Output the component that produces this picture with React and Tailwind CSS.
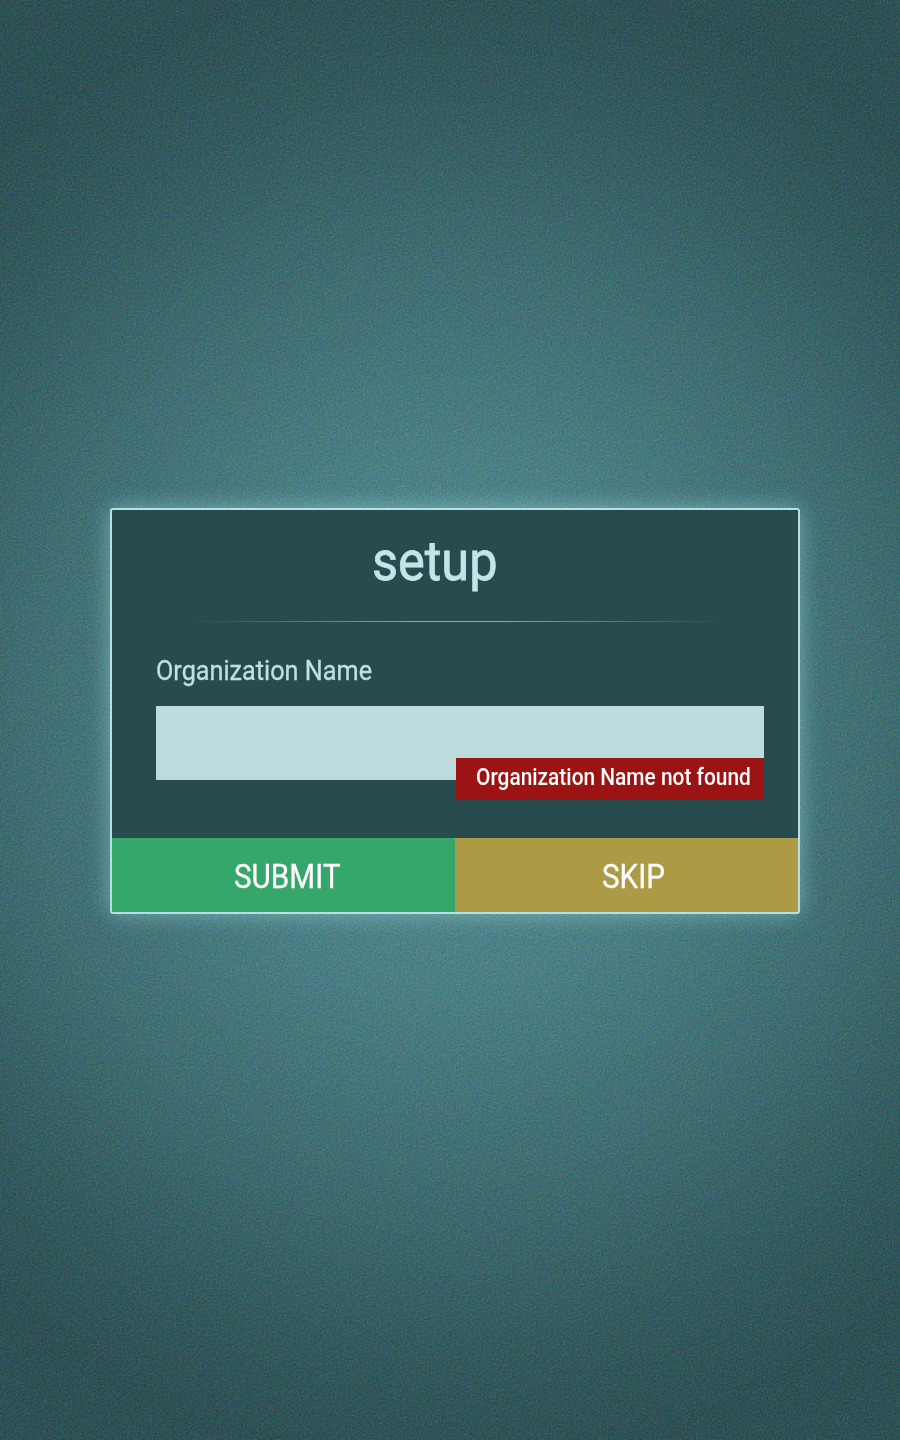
import React from "react";

function Grain() {
  return (
    <svg className="pointer-events-none absolute inset-0 h-full w-full opacity-10" aria-hidden="true">
      <filter id="grain" colorInterpolationFilters="sRGB">
        <feTurbulence type="fractalNoise" baseFrequency="0.55" numOctaves="3" stitchTiles="stitch" />
        <feComponentTransfer>
          <feFuncR type="linear" slope="2.6" intercept="-1" />
          <feFuncG type="linear" slope="2.6" intercept="-0.9" />
          <feFuncB type="linear" slope="2.6" intercept="-0.9" />
          <feFuncA type="linear" slope="0" intercept="1" />
        </feComponentTransfer>
      </filter>
      <rect width="100%" height="100%" filter="url(#grain)" />
    </svg>
  );
}

export default function App() {
  return (
    <main className="relative isolate flex h-[1440px] w-[900px] flex-col overflow-hidden bg-[radial-gradient(ellipse_740px_780px_at_450px_720px,#58989d_0%,#4c8489_32%,#3e6f74_58%,#2f585c_82%,#2a4f53_95%,#2a4f53_100%)] pt-[508px] pl-[110px] font-['Roboto',sans-serif]">
      <Grain />
      <form
        className="relative flex h-[406px] w-[690px] flex-col rounded-[3px] border-2 border-[#b5e1e4] bg-[#284b4d] shadow-[0_0_22px_rgba(150,210,215,0.6)]"
        onSubmit={(e) => e.preventDefault()}
      >
        <h1 className="ml-[260px] mt-[19px] h-[66px] w-fit origin-left scale-x-[0.91] whitespace-nowrap text-[55.5px] leading-[66px] text-[#c3e4e8] [-webkit-text-stroke:0.8px_#c3e4e8]">
          setup
        </h1>
        <div className="ml-[78px] mt-[26px] h-px w-[536px] shrink-0 bg-[linear-gradient(90deg,transparent,#6cb4b4_42%,#6cb4b4_58%,transparent)]" />
        <label
          htmlFor="organization"
          className="ml-11 mt-[32px] h-[34px] w-fit origin-left scale-x-[0.885] whitespace-nowrap text-[28.5px] leading-[34px] text-[#bfe0e4] [-webkit-text-stroke:0.3px_#bfe0e4]"
        >
          Organization Name
        </label>
        <div className="relative ml-11 mt-[18px] h-[74px] w-[608px] shrink-0">
          <input id="organization" className="block h-full w-full bg-[#bddadd] px-5 text-2xl outline-none" />
          <p className="absolute right-0 top-[52px] h-[42px] w-[308px] bg-[#9c1313] pl-5 leading-[38px] text-white">
            <span className="inline-block origin-left scale-x-[0.87] whitespace-nowrap text-[24px] font-medium">
              Organization Name not found
            </span>
          </p>
        </div>
        <div className="mt-auto grid h-[74px] shrink-0 grid-cols-2 grid-rows-[74px] text-[32.5px] leading-[78px] text-white [-webkit-text-stroke:0.3px_#ffffff]">
          <button type="submit" className="flex h-[74px] items-start bg-[#36a76a] pl-[122px]">
            <span className="inline-block origin-left scale-x-[0.912]">SUBMIT</span>
          </button>
          <button type="button" className="flex h-[74px] items-start bg-[#ad9a45] pl-[147px]">
            <span className="inline-block origin-left scale-x-[0.912]">SKIP</span>
          </button>
        </div>
      </form>
    </main>
  );
}
